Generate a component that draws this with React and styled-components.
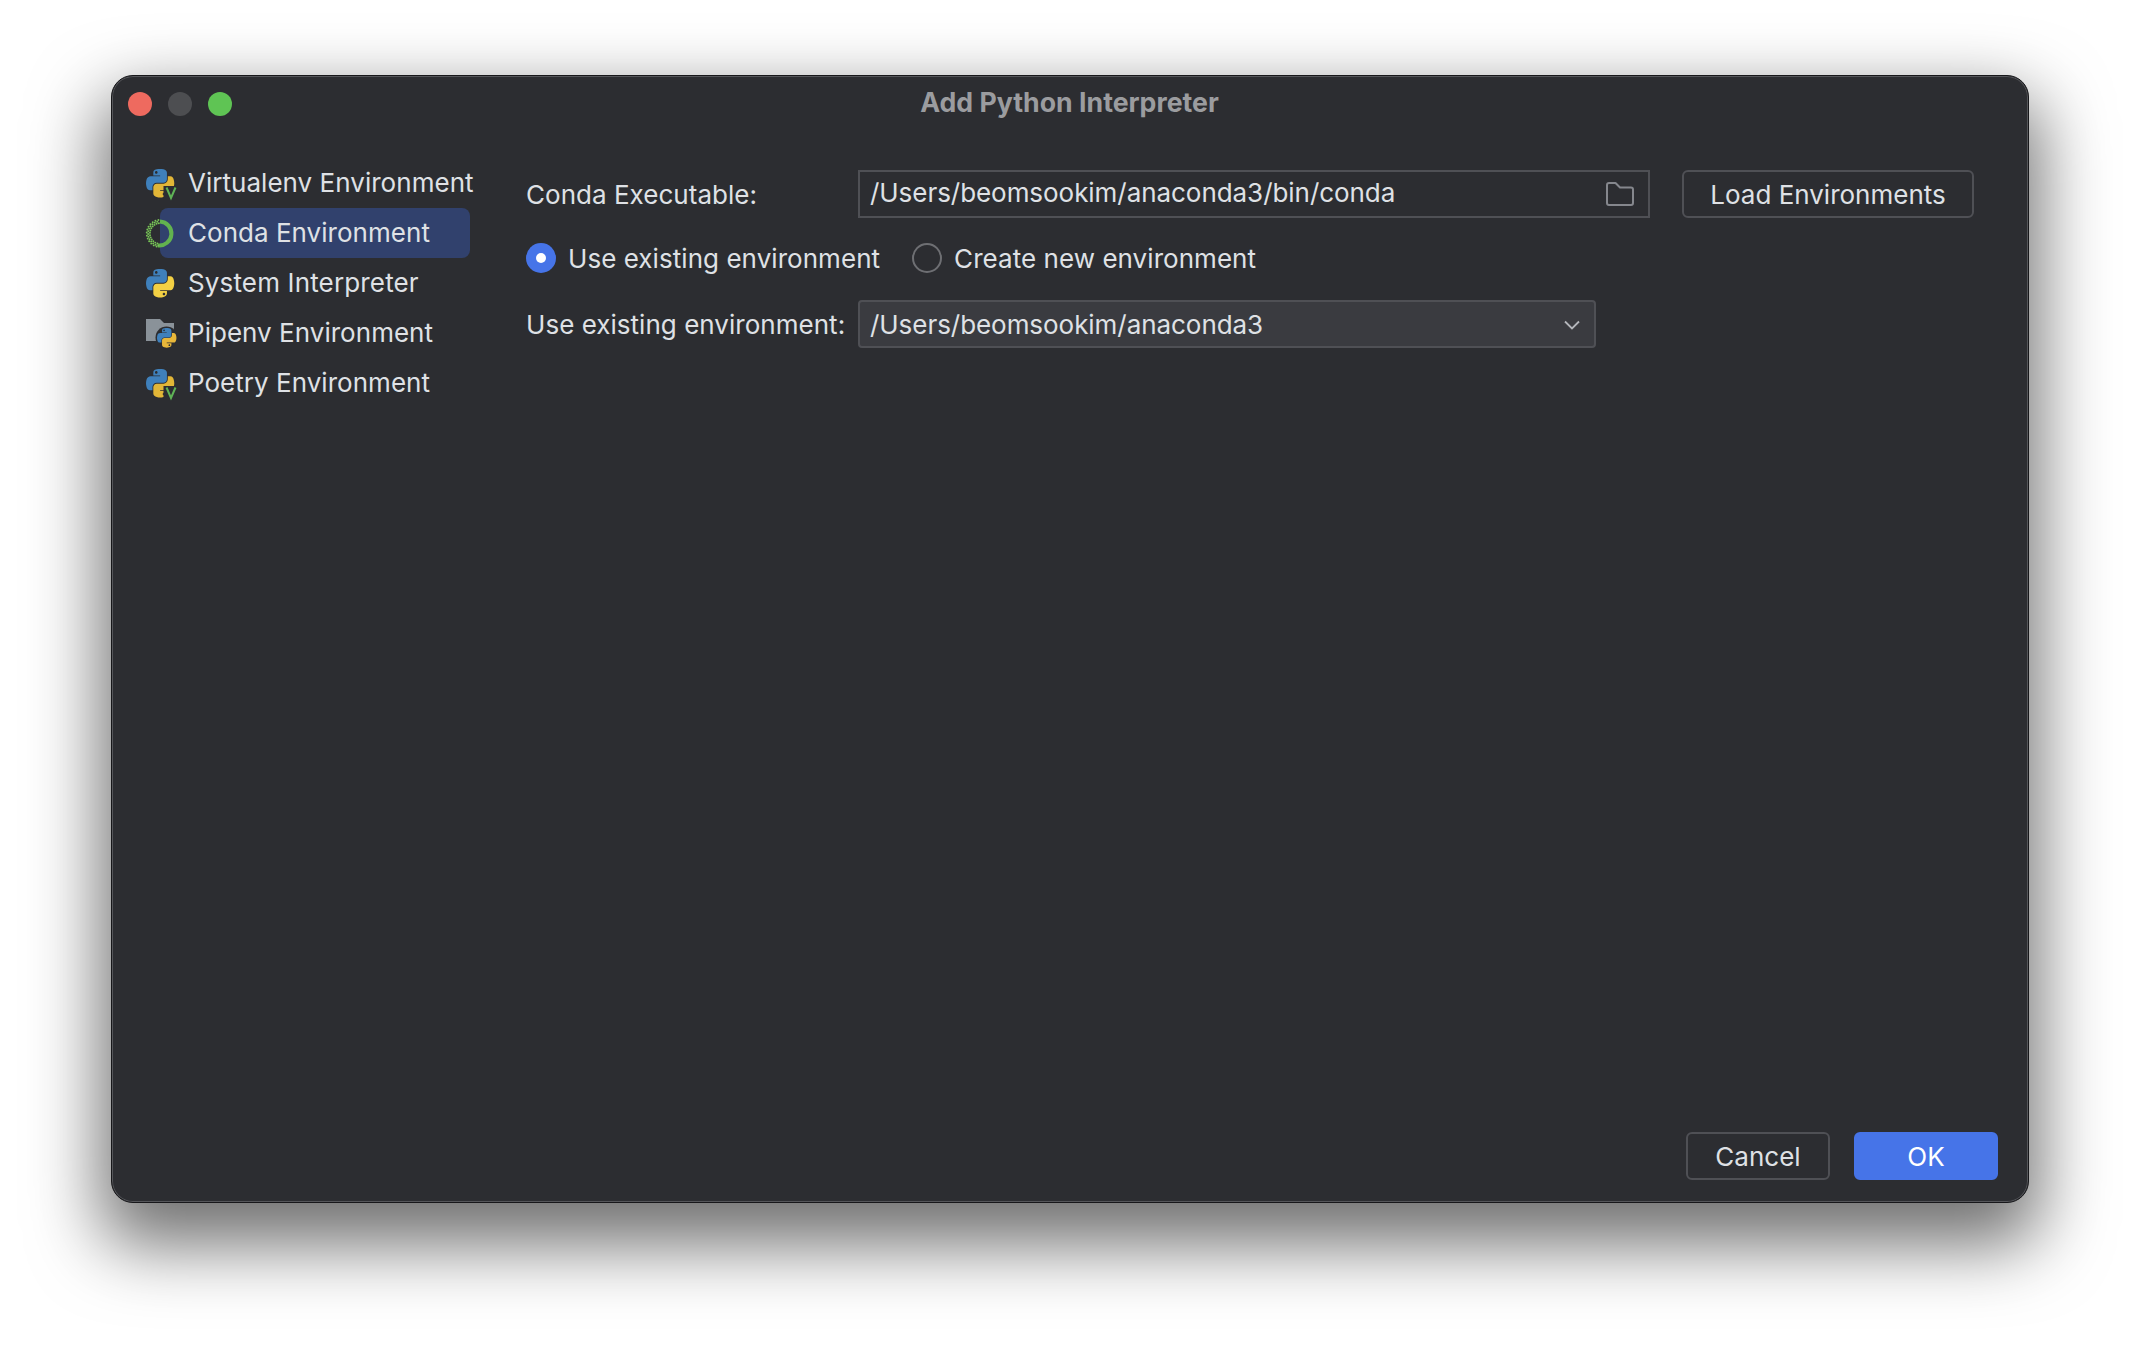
import React from 'react';
import styled, { createGlobalStyle } from 'styled-components';

const BLUE_PATH = 'M54.918 0.001c-4.584.021-8.961.412-12.812 1.094C30.757 3.099 28.7 7.295 28.7 15.032v10.219h26.812v3.406H18.638c-7.792 0-14.616 4.684-16.75 13.594-2.462 10.213-2.571 16.586 0 27.25 1.906 7.938 6.458 13.594 14.25 13.594h9.219v-12.25c0-8.85 7.657-16.656 16.75-16.656h26.781c7.455 0 13.406-6.138 13.406-13.625V15.032c0-7.266-6.13-12.725-13.406-13.938-4.606-.766-9.385-1.114-13.969-1.094zM40.418 8.22c2.77 0 5.031 2.299 5.031 5.125 0 2.816-2.262 5.094-5.031 5.094-2.779 0-5.031-2.277-5.031-5.094 0-2.826 2.252-5.125 5.031-5.125z';
const YELLOW_PATH = 'M85.637 28.657v11.906c0 9.231-7.826 17-16.75 17H42.106c-7.336 0-13.406 6.278-13.406 13.625v25.531c0 7.266 6.319 11.54 13.406 13.625 8.487 2.496 16.626 2.947 26.781 0 6.75-1.954 13.406-5.888 13.406-13.625V86.5H55.512v-3.406h40.187c7.792 0 10.696-5.435 13.406-13.594 2.799-8.399 2.68-16.476 0-27.25-1.926-7.757-5.604-13.594-13.406-13.594H85.637zM70.575 93.313c2.78 0 5.031 2.278 5.031 5.094 0 2.826-2.252 5.125-5.031 5.125-2.769 0-5.031-2.299-5.031-5.125 0-2.816 2.262-5.094 5.031-5.094z';

const WINDOW_BG = '#2c2d31';

const GlobalStyle = createGlobalStyle`
  html, body {
    margin: 0;
    padding: 0;
    background: #fff;
    overflow: hidden;
  }
  * {
    box-sizing: border-box;
  }
`;

const Snake = ({ yellow = '#f3d044', blue = '#3f80bb', scale = 0.2545, x = 0, y = 0 }) => (
  <g transform={`translate(${x} ${y}) scale(${scale})`}>
    <path d={BLUE_PATH} fill={blue} />
    <path d={YELLOW_PATH} fill={yellow} />
  </g>
);

const SystemIcon = () => (
  <IconSvg viewBox="0 0 28 28">
    <Snake />
  </IconSvg>
);

const VenvIcon = () => (
  <IconSvg viewBox="0 0 28 28">
    <Snake yellow="#e2b637" />
    <rect x="17.5" y="17" width="13" height="14" fill={WINDOW_BG} />
    <path d="M20.5 18.5 L25 29 L29.5 18.5" fill="none" stroke="#5fb356" strokeWidth="2" />
  </IconSvg>
);

// the speckled left half of the conda ring
const ringDots = [];
for (let a = 98; a <= 262; a += 13) {
  const rad = (a * Math.PI) / 180;
  [10.4, 12.2, 13.6].forEach((r, i) => {
    const off = i === 1 ? 0.11 : 0;
    ringDots.push({
      cx: 14.3 + r * Math.cos(rad + off),
      cy: 14.5 - r * Math.sin(rad + off),
      key: `${a}-${i}`,
    });
  });
}

const CondaIcon = () => (
  <IconSvg viewBox="0 0 28 28">
    <path d="M14 2.5 A12 12 0 1 1 12 26.4" fill="none" stroke="#62b34f" strokeWidth="4" />
    {ringDots.map((d) => (
      <circle key={d.key} cx={d.cx} cy={d.cy} r="0.95" fill="#78c457" />
    ))}
  </IconSvg>
);

const PipenvIcon = () => (
  <IconSvg viewBox="0 0 28 28">
    <path d="M0 0 H14 L18 4 H28 V22 H0 Z" fill="#8a9299" />
    <circle cx="20.5" cy="18.5" r="11" fill={WINDOW_BG} />
    <Snake x={11} y={9} scale={0.175} yellow="#e8b73a" />
  </IconSvg>
);

const items = [
  { label: 'Virtualenv Environment', Icon: VenvIcon },
  { label: 'Conda Environment', Icon: CondaIcon, selected: true },
  { label: 'System Interpreter', Icon: SystemIcon, tracking: 0.15 },
  { label: 'Pipenv Environment', Icon: PipenvIcon },
  { label: 'Poetry Environment', Icon: VenvIcon },
];

export default function App() {
  return (
    <Page>
      <GlobalStyle />
      <Window>
        <TitleBar>
          <Lights>
            <Light $color="#ee6a5f" />
            <Light $color="#4d4e51" />
            <Light $color="#5fc454" />
          </Lights>
          <Title>Add Python Interpreter</Title>
        </TitleBar>

        <Body>
          <Sidebar>
            {items.map(({ label, Icon, selected, tracking = 0.03 }) => (
              <SideItem key={label} $selected={selected}>
                <Icon />
                <SideLabel $tracking={tracking}>{label}</SideLabel>
              </SideItem>
            ))}
          </Sidebar>

          <Content>
            <FormRow>
              <Label>Conda Executable:</Label>
              <PathField>
                <FieldText>/Users/beomsookim/anaconda3/bin/conda</FieldText>
                <FolderIcon viewBox="0 0 28 24">
                  <path
                    d="M1 3 a2 2 0 0 1 2 -2 H9.5 L14 5.5 H25 a2 2 0 0 1 2 2 V21 a2 2 0 0 1 -2 2 H3 a2 2 0 0 1 -2 -2 Z"
                    fill="none"
                    stroke="#85878d"
                    strokeWidth="2"
                    strokeLinejoin="round"
                  />
                </FolderIcon>
              </PathField>
              <Button $wide>Load Environments</Button>
            </FormRow>

            <RadioRow>
              <RadioOption>
                <Radio $checked />
                Use existing environment
              </RadioOption>
              <RadioOption>
                <Radio />
                Create new environment
              </RadioOption>
            </RadioRow>

            <FormRow>
              <Label>Use existing environment:</Label>
              <SelectField>
                <FieldText>/Users/beomsookim/anaconda3</FieldText>
                <ChevronIcon viewBox="0 0 16 10">
                  <path d="M1 1.5 L8 8.5 L15 1.5" fill="none" stroke="#b4b6bb" strokeWidth="1.8" />
                </ChevronIcon>
              </SelectField>
            </FormRow>
          </Content>
        </Body>

        <Footer>
          <Button>Cancel</Button>
          <Button $primary>OK</Button>
        </Footer>
      </Window>
    </Page>
  );
}

const Page = styled.div`
  width: 2140px;
  height: 1350px;
  padding: 75px 0 0 111px;
  background: #fff;
  font-family: Inter, 'Liberation Sans', sans-serif;
  font-size: 26px;
  color: #dfe1e5;
`;

const Window = styled.div`
  width: 1918px;
  height: 1128px;
  display: flex;
  flex-direction: column;
  background: ${WINDOW_BG};
  border: 1px solid #17171a;
  border-radius: 22px;
  box-shadow:
    inset 0 0 0 1px #55565a,
    0 32px 70px 10px rgba(0, 0, 0, 0.56);
`;

const TitleBar = styled.div`
  height: 56px;
  flex: none;
  display: grid;
  grid-template-columns: 1fr auto 1fr;
  align-items: center;
  padding: 0 17px 0 16px;
`;

const Lights = styled.div`
  display: flex;
  gap: 16px;
`;

const Light = styled.div`
  width: 24px;
  height: 24px;
  border-radius: 50%;
  background: ${(p) => p.$color};
`;

const Title = styled.div`
  font-weight: 700;
  font-size: 26.7px;
  line-height: 32px;
  padding-bottom: 4px;
  color: #9b9c9f;
`;

const Body = styled.div`
  flex: 1;
  display: flex;
  min-height: 0;
`;

const Sidebar = styled.div`
  width: 414px;
  flex: none;
  padding: 26px 0 0 48px;
`;

const SideItem = styled.div`
  width: 310px;
  height: 50px;
  display: flex;
  align-items: center;
  gap: 14px;
  white-space: nowrap;
  border-radius: 8px;
  background: ${(p) => (p.$selected ? '#31416d' : 'transparent')};
`;

const SideLabel = styled.span`
  letter-spacing: ${(p) => p.$tracking}px;
  padding-bottom: 2px;
`;

const IconSvg = styled.svg`
  width: 28px;
  height: 28px;
  margin-left: -14px;
  flex: none;
  overflow: visible;
`;

const Content = styled.div`
  flex: 1;
  padding-top: 38px;
  display: flex;
  flex-direction: column;
`;

const FormRow = styled.div`
  display: flex;
  align-items: center;
  height: 48px;
`;

const Label = styled.div`
  width: 332px;
  flex: none;
  white-space: nowrap;
  letter-spacing: 0.03px;
`;

const PathField = styled.div`
  width: 792px;
  height: 48px;
  flex: none;
  display: flex;
  align-items: center;
  justify-content: space-between;
  padding: 0 14px 3px 10px;
  border: 2px solid #4f5055;
`;

const SelectField = styled.div`
  width: 738px;
  height: 48px;
  flex: none;
  display: flex;
  align-items: center;
  justify-content: space-between;
  padding: 0 14px 0 10px;
  background: #3a3b40;
  border: 2px solid #4f5055;
  border-radius: 4px;
`;

const FieldText = styled.span`
  white-space: nowrap;
  letter-spacing: -0.05px;
`;

const FolderIcon = styled.svg`
  width: 28px;
  height: 24px;
  flex: none;
  margin-top: 3px;
`;

const ChevronIcon = styled.svg`
  width: 16px;
  height: 10px;
  flex: none;
  margin-top: 2px;
`;

const Button = styled.div`
  width: ${(p) => (p.$wide ? '292px' : '144px')};
  height: 48px;
  margin-left: ${(p) => (p.$wide ? '32px' : '0')};
  flex: none;
  display: flex;
  align-items: center;
  justify-content: center;
  border-radius: 6px;
  border: 2px solid ${(p) => (p.$primary ? '#4674e8' : '#4f5055')};
  background: ${(p) => (p.$primary ? '#4674e8' : 'transparent')};
  color: ${(p) => (p.$primary ? '#fff' : '#dfe1e5')};
`;

const RadioRow = styled.div`
  display: flex;
  gap: 32px;
  height: 30px;
  margin: 25px 0 27px;
`;

const RadioOption = styled.div`
  display: flex;
  align-items: center;
  gap: 12px;
  white-space: nowrap;
  letter-spacing: 0.05px;
`;

const Radio = styled.span`
  width: 30px;
  height: 30px;
  flex: none;
  border-radius: 50%;
  background: ${(p) => (p.$checked ? '#4674e8' : 'transparent')};
  border: ${(p) => (p.$checked ? 'none' : '2px solid #6e6f73')};
  display: flex;
  align-items: center;
  justify-content: center;
  &::after {
    content: '';
    display: ${(p) => (p.$checked ? 'block' : 'none')};
    width: 10px;
    height: 10px;
    border-radius: 50%;
    background: #fff;
  }
`;

const Footer = styled.div`
  flex: none;
  display: flex;
  justify-content: flex-end;
  gap: 24px;
  padding: 0 30px 22px 0;
`;
